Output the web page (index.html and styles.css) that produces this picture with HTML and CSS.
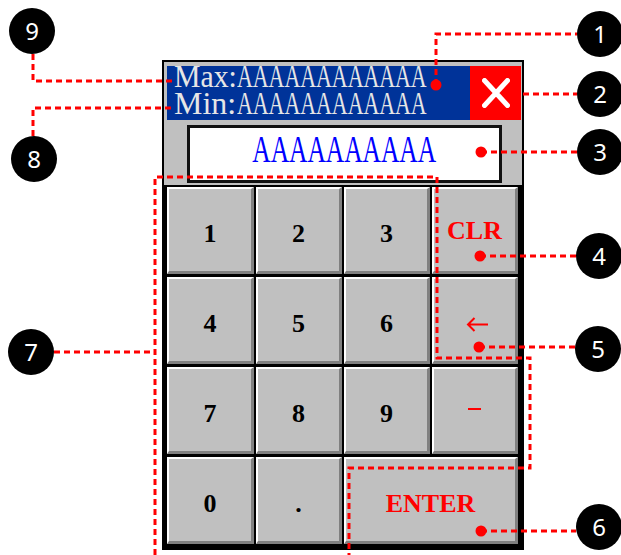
FILE: index.html
```
<!DOCTYPE html>
<html>
<head>
<meta charset="utf-8">
<link rel="stylesheet" href="styles.css">
</head>
<body>
<div class="stage">
  <div class="pad">
    <div class="titlebar">
      <div class="range">
        <div class="rline"><span class="rk"><span>Max:</span></span><span class="rv"><span>AAAAAAAAAAAA</span></span></div>
        <div class="rline"><span class="rk"><span class="wide">Min:</span></span><span class="rv"><span>AAAAAAAAAAAA</span></span></div>
      </div>
      <div class="close">
        <svg width="28" height="30" viewBox="0 0 28 30"><path d="M2.5 2.5 L25.5 27.5 M25.5 2.5 L2.5 27.5" stroke="#fff" stroke-width="5" stroke-linecap="round" fill="none"/></svg>
      </div>
    </div>
    <div class="display"><span>AAAAAAAAAA</span></div>
    <div class="keys">
      <div class="key">1</div>
      <div class="key">2</div>
      <div class="key">3</div>
      <div class="key red clr">CLR</div>
      <div class="key">4</div>
      <div class="key">5</div>
      <div class="key">6</div>
      <div class="key red"><svg class="arrow" width="22" height="15" viewBox="0 0 22 15"><path d="M1.5 7.5 H22 M8.5 1 L2 7.5 L8.5 14" stroke="#f00" stroke-width="2" fill="none"/></svg></div>
      <div class="key">7</div>
      <div class="key">8</div>
      <div class="key">9</div>
      <div class="key red"><span class="minus"></span></div>
      <div class="key">0</div>
      <div class="key">.</div>
      <div class="key red enter">ENTER</div>
    </div>
  </div>
  <svg class="notes" width="621" height="555" viewBox="0 0 621 555">
    <g fill="none" stroke="#f00" stroke-width="3" stroke-dasharray="6 4">
      <path d="M33 54 V81 H172"/>
      <path d="M33 136 V108 H172"/>
      <path d="M436 85 V34 H577"/>
      <path d="M523 94 H577"/>
      <path d="M481 152 H577"/>
      <path d="M480 256 H576"/>
      <path d="M479 347 H575"/>
      <path d="M481 531 H576"/>
      <path d="M54 352 H155"/>
      <path d="M155 555 V177 H437 V358 H530 V468 H349 V555"/>
    </g>
    <g fill="#f00">
      <circle cx="436" cy="85" r="5.5"/>
      <circle cx="481" cy="152" r="5.5"/>
      <circle cx="480" cy="256" r="5.5"/>
      <circle cx="479" cy="347" r="5.5"/>
      <circle cx="481" cy="531" r="5.5"/>
    </g>
    <g fill="#000">
      <circle cx="32" cy="31" r="23"/>
      <circle cx="34" cy="159" r="23"/>
      <circle cx="31" cy="352" r="23"/>
      <circle cx="600" cy="34" r="23"/>
      <circle cx="600" cy="94" r="23"/>
      <circle cx="600" cy="152" r="23"/>
      <circle cx="599" cy="256" r="23"/>
      <circle cx="598" cy="349" r="23"/>
      <circle cx="599" cy="527" r="23"/>
    </g>
    <g class="num" fill="#fff" text-anchor="middle">
      <text x="32" y="39.5">9</text>
      <text x="34" y="167.5">8</text>
      <text x="31" y="360.5">7</text>
      <text x="600" y="42.5">1</text>
      <text x="600" y="102.5">2</text>
      <text x="600" y="160.5">3</text>
      <text x="599" y="264.5">4</text>
      <text x="598" y="357.5">5</text>
      <text x="599" y="535.5">6</text>
    </g>
  </svg>
</div>
</body>
</html>
```
FILE: styles.css
```
body {
  margin: 0;
  background: #fff;
}
.stage {
  position: relative;
  width: 621px;
  height: 555px;
  overflow: hidden;
  padding: 60px 0 0 162px;
  box-sizing: border-box;
}
.pad {
  width: 362px;
  box-sizing: border-box;
  border: 2px solid #000;
  border-bottom-width: 3px;
  background: #c0c0c0;
}
.titlebar {
  display: flex;
  height: 54px;
  margin: 4px 1px 0 3px;
}
.range {
  flex: 1;
  background: #003399;
  color: #e6e6e6;
  font-family: "Liberation Serif", serif;
  font-size: 24px;
  line-height: 27px;
  padding-left: 7px;
}
.rline {
  display: flex;
  height: 27px;
  white-space: nowrap;
}
.rk {
  width: 63px;
  flex: none;
}
.rk span,
.rv span {
  display: inline-block;
  line-height: 20px;
  transform-origin: 0 16.9px;
}
.rk span {
  transform: scale(1.24, 1.333);
}
.rk span.wide {
  transform: scale(1.33, 1.333);
}
.rv span {
  transform: scale(.912, 1.333);
}
.close {
  width: 51px;
  background: #ff0000;
  display: flex;
  align-items: center;
  justify-content: center;
}
.close svg {
  display: block;
}
.display {
  margin: 5px 0 0 23px;
  width: 315px;
  height: 58px;
  box-sizing: border-box;
  border: 3px solid #111;
  background: #fff;
  text-align: center;
  font-family: "Liberation Serif", serif;
  font-size: 38px;
  line-height: 43px;
  color: #0000ff;
  white-space: nowrap;
}
.display span {
  display: inline-block;
  transform: scaleX(.67);
}
.keys {
  margin-top: 2px;
  background: #000;
  padding: 2px 4px 3px 3px;
  display: grid;
  grid-template-columns: 87px 86px 86px 86px;
  grid-template-rows: repeat(4, 87px);
  gap: 3px 2px;
}
.key {
  background: #c0c0c0;
  border-style: solid;
  border-width: 2px 3px 3px 2px;
  border-color: #fff #808080 #808080 #fff;
  box-sizing: border-box;
  display: flex;
  align-items: center;
  justify-content: center;
  padding-top: 8px;
  font-family: "Liberation Serif", serif;
  font-weight: bold;
  font-size: 26px;
  line-height: 30px;
  color: #000;
}
.red {
  color: #ff0000;
}
.clr {
  padding-top: 2px;
}
.enter {
  grid-column: 3 / 5;
}
.arrow {
  display: block;
  margin-left: 4px;
}
.minus {
  display: block;
  width: 13px;
  height: 2px;
  background: #ff0000;
  margin-bottom: 10px;
}
.notes {
  position: absolute;
  left: 0;
  top: 0;
}
.num {
  font-family: "Noto Sans", "Open Sans", sans-serif;
  font-size: 24px;
}
```
